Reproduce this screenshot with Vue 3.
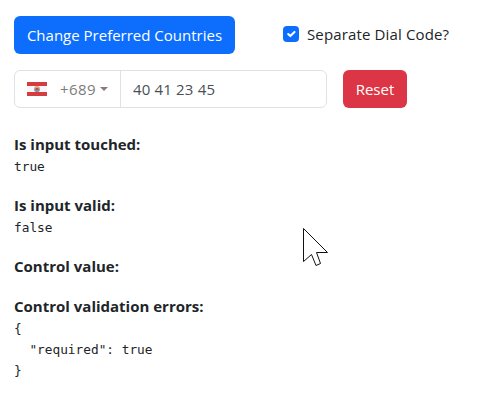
<script setup>
import { ref, computed } from 'vue'

const separate = ref(true)
const phone = ref('40 41 23 45')
const errors = { required: true }
const status = computed(() => [
  { title: 'Is input touched:', value: 'true' },
  { title: 'Is input valid:', value: 'false' },
  { title: 'Control value:', value: '' },
  { title: 'Control validation errors:', value: JSON.stringify(errors, null, 2) },
])
</script>

<template>
  <main class="page">
    <div class="row">
      <button class="btn primary" type="button">Change Preferred Countries</button>
      <label class="check">
        <input v-model="separate" type="checkbox" />
        <span class="box">
          <svg v-if="separate" viewBox="0 0 20 20" width="14" height="14">
            <path d="M6 10l3 3 6-6" fill="none" stroke="#fff" stroke-width="3" stroke-linecap="round" stroke-linejoin="round" />
          </svg>
        </span>
        <span class="check-text">Separate Dial Code?</span>
      </label>
    </div>

    <div class="row second">
      <div class="phone">
        <div class="country">
          <svg class="flag" width="20" height="14" viewBox="0 0 20 14">
            <rect width="20" height="14" fill="#f8f5f8" />
            <rect width="20" height="4" fill="#d43c40" />
            <rect y="10" width="20" height="4" fill="#d43c40" />
            <circle cx="10" cy="7" r="3" fill="#dda47f" />
            <path d="M7.2 7.2h5.6a2.8 2.8 0 0 1-5.6 0z" fill="#7795bd" />
            <path d="M8.5 6h3v2h-3z" fill="#c44e4b" />
          </svg>
          <span class="dial">+689</span>
          <span class="arrow"></span>
        </div>
        <input v-model="phone" class="number" type="text" />
      </div>
      <button class="btn danger" type="button">Reset</button>
    </div>

    <section class="status">
      <div v-for="s in status" :key="s.title" class="item">
        <strong>{{ s.title }}</strong>
        <pre>{{ s.value }}</pre>
      </div>
    </section>

    <svg class="cursor" width="27" height="40" viewBox="0 0 27 40">
      <path d="M1.5 1.5V34.5L9.5 27.5L14 38.5L18.5 36.5L14.5 25.5H25.5Z" fill="#fff" stroke="#111" stroke-width="1" />
    </svg>
  </main>
</template>

<style>
body {
  margin: 0;
  background: #fff;
}
</style>

<style scoped>
.page {
  box-sizing: border-box;
  width: 487px;
  height: 402px;
  padding: 16px 14px 0;
  overflow: hidden;
  font-family: "Open Sans", "Noto Sans", sans-serif;
  font-size: 15px;
  line-height: 24px;
  color: #212529;
  background: #fff;
}
.row {
  display: flex;
  align-items: center;
  height: 38px;
}
.second {
  margin-top: 16px;
  gap: 16px;
}
.btn {
  box-sizing: border-box;
  height: 38px;
  padding: 0;
  border: 0;
  border-radius: 6px;
  color: #fff;
  font: inherit;
  white-space: nowrap;
}
.primary {
  width: 221px;
  background: #0d6efd;
}
.danger {
  width: 64px;
  background: #dc3545;
}
.check {
  display: flex;
  align-items: center;
  gap: 8px;
  margin-left: 48px;
  margin-top: -2px;
  white-space: nowrap;
}
.check input {
  display: none;
}
.check-text {
  letter-spacing: 0.14px;
}
.box {
  display: flex;
  align-items: center;
  justify-content: center;
  width: 16px;
  height: 16px;
  border-radius: 4px;
  background: #0d6efd;
}
.phone {
  box-sizing: border-box;
  display: flex;
  width: 313px;
  height: 38px;
  border: 1px solid #dee2e6;
  border-radius: 6px;
  overflow: hidden;
}
.country {
  box-sizing: border-box;
  display: flex;
  align-items: center;
  width: 106px;
  padding-left: 12px;
  border-right: 1px solid #dee2e6;
  color: #7c7c7c;
}
.dial {
  width: 37px;
  margin-left: 13px;
  letter-spacing: 0.4px;
}
.arrow {
  margin-left: 3px;
  border: 4px solid transparent;
  border-top: 4px solid #8c7780;
  border-bottom: 0;
}
.number {
  flex: 1;
  min-width: 0;
  padding: 0 12px;
  border: 0;
  outline: 0;
  color: #495057;
  font: inherit;
  letter-spacing: 0.17px;
  background: transparent;
}
.status {
  margin-top: 24px;
}
.item {
  margin-bottom: 16px;
}
strong {
  display: block;
  font-weight: 700;
}
pre {
  margin: 0;
  font-family: "DejaVu Sans Mono", monospace;
  font-size: 12.79px;
  line-height: 21px;
}
.cursor {
  position: absolute;
  left: 302px;
  top: 227px;
}
</style>
